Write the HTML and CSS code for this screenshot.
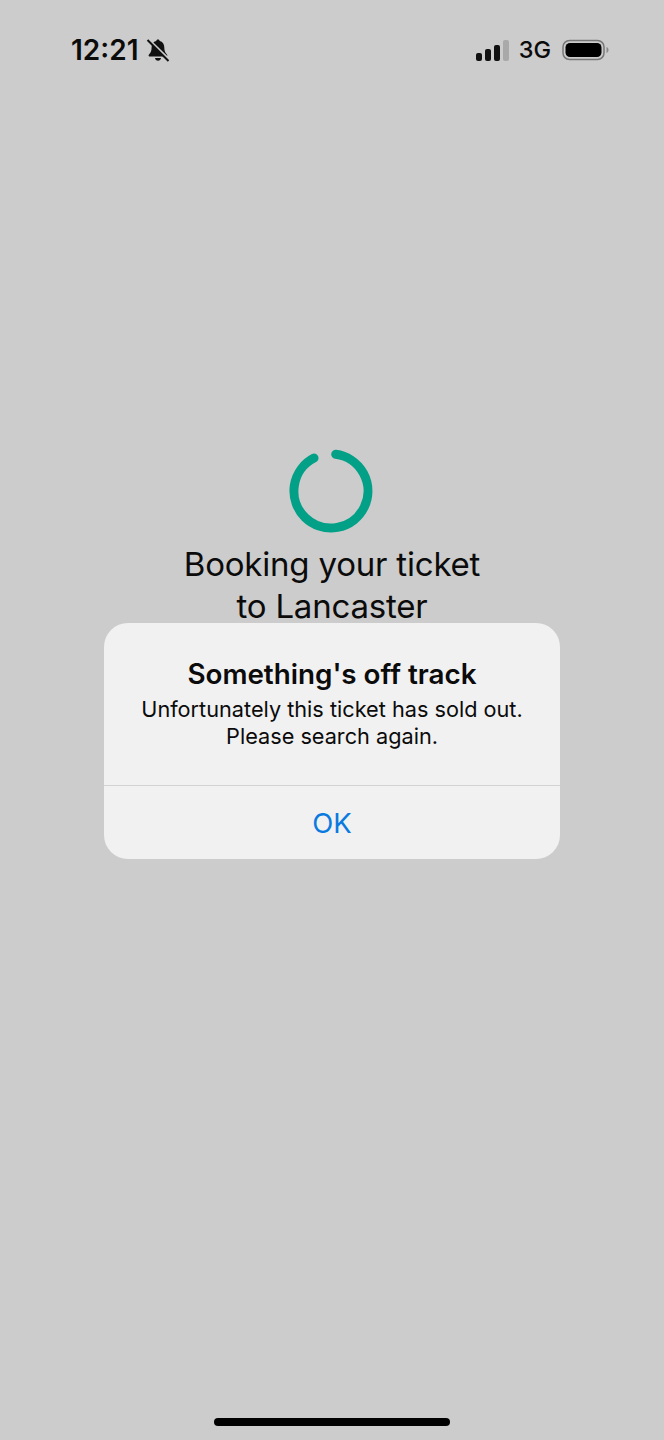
FILE: index.html
```html
<!DOCTYPE html>
<html lang="en">
<head>
<meta charset="utf-8">
<title>Booking</title>
<link rel="stylesheet" href="styles.css">
</head>
<body>
<div class="screen">
  <header class="status">
    <div class="status-left">
      <span class="time">12:21</span>
      <svg class="bell" width="24" height="24" viewBox="0 0 24 24">
        <path class="bell-body" d="M12 1.500c1 0 1.600.7 1.700 1.600 3 .7 4.600 3.200 4.600 6.400 0 3 .7 5 2.200 6.400.5.5.8 1 .8 1.500 0 .7-.5 1.100-1.300 1.100H3.900c-.8 0-1.300-.4-1.300-1.100 0-.5.3-1 .8-1.500 1.500-1.400 2.200-3.400 2.200-6.400 0-3.200 1.600-5.700 4.600-6.400.1-.9.7-1.600 1.800-1.600z"/>
        <path class="bell-body" d="M9 20h6c-.2 1.600-1.400 2.700-3 2.700S9.200 21.600 9 20z"/>
        <path class="bell-gap" d="M1.500 0.500 23 21.500"/>
        <path class="bell-slash" d="M1.500 2 22.500 23"/>
      </svg>
    </div>
    <div class="status-right">
      <div class="signal">
        <span class="bar bar-1"></span>
        <span class="bar bar-2"></span>
        <span class="bar bar-3"></span>
        <span class="bar bar-4"></span>
      </div>
      <span class="network">3G</span>
      <svg class="battery" width="47" height="22" viewBox="0 0 47 22">
        <rect class="battery-shell" x="1" y="1.500" width="41" height="19" rx="6.500"/>
        <rect class="battery-fill" x="3.500" y="4" width="36" height="14" rx="4.500"/>
        <path class="battery-cap" d="M44.500 8c1.300.4 2 1.600 2 3s-.7 2.600-2 3z"/>
      </svg>
    </div>
  </header>

  <main class="content">
    <svg class="spinner" width="84" height="86" viewBox="0 0 84 86">
      <path class="spinner-arc" d="M45.700 6.300A37 37 0 1 1 24 10.100"/>
    </svg>
    <h1 class="heading">Booking your ticket<br>to Lancaster</h1>
  </main>

  <div class="dialog">
    <div class="dialog-body">
      <h2 class="dialog-title">Something's off track</h2>
      <p class="dialog-text">Unfortunately this ticket has sold out.<br>Please search again.</p>
    </div>
    <div class="dialog-action">OK</div>
  </div>

  <div class="home-indicator"></div>
</div>
</body>
</html>
```

FILE: styles.css
```css
* { box-sizing: border-box; }
html, body { margin: 0; padding: 0; }
body { background: #cccccc; font-family: Inter, "Liberation Sans", sans-serif; color: #0b0b0b; }
.screen { position: relative; width: 664px; height: 1440px; display: flex; flex-direction: column; background: #cccccc; overflow: hidden; }

.status { display: flex; justify-content: space-between; align-items: center; height: 28px; margin-top: 36px; padding: 0 55px 0 71px; }
.status-left { display: flex; align-items: center; gap: 7px; }
.time { font-size: 28px; font-weight: 600; line-height: 28px; }
.bell { display: block; }
.bell-body { fill: #111; }
.bell-gap { stroke: #cccccc; stroke-width: 2.500; fill: none; }
.bell-slash { stroke: #111; stroke-width: 2; fill: none; }
.status-right { display: flex; align-items: center; }
.signal { display: flex; align-items: flex-end; gap: 3px; height: 21px; margin-right: 9.500px; }
.bar { display: block; width: 6px; border-radius: 2px; background: #111; }
.bar-1 { height: 8px; }
.bar-2 { height: 12px; }
.bar-3 { height: 16px; }
.bar-4 { height: 21px; background: #a9a9a9; }
.network { font-size: 23.500px; font-weight: 500; line-height: 28px; margin-right: 11px; }
.battery { display: block; }
.battery-shell { fill: none; stroke: #777; stroke-width: 1.500; }
.battery-fill { fill: #000; }
.battery-cap { fill: #8a8a8a; }

.content { display: flex; flex-direction: column; align-items: center; padding-top: 384px; }
.spinner { display: block; overflow: visible; }
.spinner-arc { fill: none; stroke: #03a088; stroke-width: 9; stroke-linecap: round; }
.heading { margin: 9px 0 0; font-size: 33px; font-weight: 400; line-height: 42px; text-align: center; letter-spacing: -0.2px; }

.dialog { position: absolute; left: 104px; top: 623px; width: 456px; height: 236px; border-radius: 24px; background: #f1f1f1; display: flex; flex-direction: column; }
.dialog-body { height: 163px; padding-top: 34px; text-align: center; border-bottom: 1px solid #d2d2d2; }
.dialog-title { margin: 0; font-size: 27.800px; font-weight: 600; line-height: 34px; }
.dialog-text { margin: 5px 0 0; font-size: 21.700px; font-weight: 400; line-height: 27px; }
.dialog-action { flex: 1; display: flex; align-items: center; justify-content: center; font-size: 27.500px; color: #0a7ae0; }

.home-indicator { position: absolute; left: 214px; top: 1418px; width: 236px; height: 8px; border-radius: 4px; background: #000; }
```
